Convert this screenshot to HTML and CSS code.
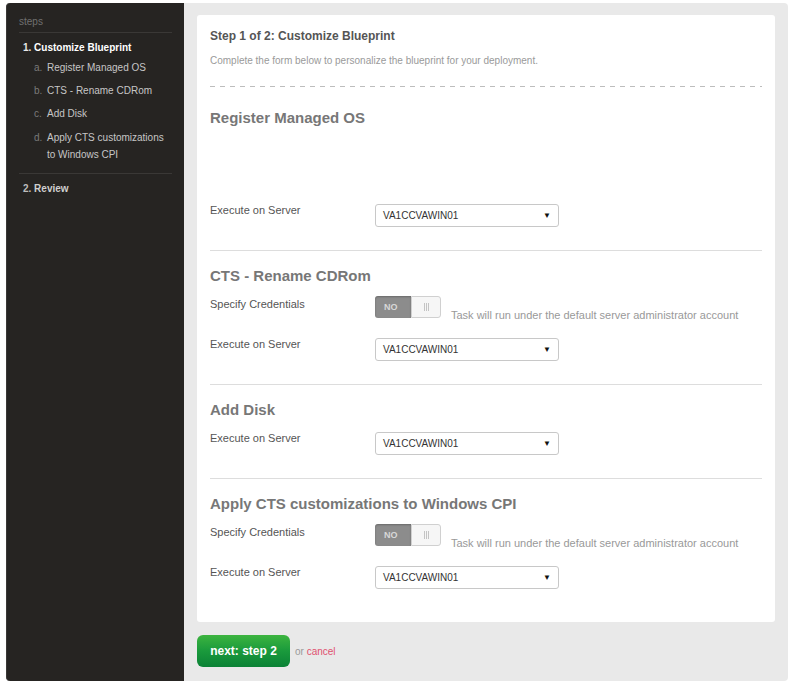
FILE: index.html
```html
<!DOCTYPE html>
<html>
<head>
<meta charset="utf-8">
<link rel="stylesheet" href="styles.css">
</head>
<body>
<div class="app">
  <aside class="sidebar">
    <div class="steps-title">steps</div>
    <div class="step step-active"><span class="num">1.</span> Customize Blueprint</div>
    <ul class="substeps">
      <li><span class="letter">a.</span><span class="subtext">Register Managed OS</span></li>
      <li><span class="letter">b.</span><span class="subtext">CTS - Rename CDRom</span></li>
      <li><span class="letter">c.</span><span class="subtext">Add Disk</span></li>
      <li class="long"><span class="letter">d.</span><span class="subtext">Apply CTS customizations to Windows CPI</span></li>
    </ul>
    <div class="step step-next"><span class="num">2.</span> Review</div>
  </aside>
  <main class="main">
    <div class="card">
      <h1 class="title">Step 1 of 2: Customize Blueprint</h1>
      <p class="subtitle">Complete the form below to personalize the blueprint for your deployment.</p>
      <div class="dashed"></div>

      <section class="section">
        <h2 class="section-title">Register Managed OS</h2>
        <div class="spacer"></div>
        <div class="field">
          <label class="label">Execute on Server</label>
          <div class="select"><span>VA1CCVAWIN01</span><span class="arrow">&#9660;</span></div>
        </div>
      </section>

      <section class="section">
        <h2 class="section-title">CTS - Rename CDRom</h2>
        <div class="field field-toggle">
          <label class="label">Specify Credentials</label>
          <div class="toggle"><span class="toggle-no">NO</span><span class="toggle-knob"><span class="grip"></span></span></div>
          <span class="help">Task will run under the default server administrator account</span>
        </div>
        <div class="field">
          <label class="label">Execute on Server</label>
          <div class="select"><span>VA1CCVAWIN01</span><span class="arrow">&#9660;</span></div>
        </div>
      </section>

      <section class="section">
        <h2 class="section-title">Add Disk</h2>
        <div class="field">
          <label class="label">Execute on Server</label>
          <div class="select"><span>VA1CCVAWIN01</span><span class="arrow">&#9660;</span></div>
        </div>
      </section>

      <section class="section section-last">
        <h2 class="section-title">Apply CTS customizations to Windows CPI</h2>
        <div class="field field-toggle">
          <label class="label">Specify Credentials</label>
          <div class="toggle"><span class="toggle-no">NO</span><span class="toggle-knob"><span class="grip"></span></span></div>
          <span class="help">Task will run under the default server administrator account</span>
        </div>
        <div class="field">
          <label class="label">Execute on Server</label>
          <div class="select"><span>VA1CCVAWIN01</span><span class="arrow">&#9660;</span></div>
        </div>
      </section>
    </div>
    <div class="actions">
      <button class="btn-next">next: step 2</button>
      <span class="or">or <a class="cancel" href="#">cancel</a></span>
    </div>
  </main>
</div>
</body>
</html>
```

FILE: styles.css
```css
* { box-sizing: border-box; }
html, body { margin: 0; padding: 0; background: #ffffff; }
body { font-family: "Liberation Sans", Arial, sans-serif; }

.app {
  display: flex;
  margin: 3px 0 0 6px;
  width: 782px;
  height: 678px;
}

.sidebar {
  width: 178px;
  flex: none;
  background: #262422;
  border-radius: 4px 0 0 4px;
  border-left: 1px solid #3a3836;
  padding: 12px 12px 0 12px;
  color: #ccc;
  font-size: 10px;
}
.steps-title {
  font-size: 10px;
  line-height: 14px;
  color: #707070;
  padding-bottom: 3px;
  border-bottom: 1px solid #3a3836;
}
.step {
  font-weight: bold;
  line-height: 14px;
  padding-left: 4px;
}
.step-active { color: #ffffff; margin-top: 8px; }
.step-active .num { color: #e8e8e8; }
.step-next { color: #cfcfcf; margin-top: 8px; }
.step-next .num { color: #bdbdbd; }

.substeps {
  list-style: none;
  margin: 4px 0 0 0;
  padding: 0 0 10px 15px;
  border-bottom: 1px solid #3a3836;
}
.substeps li {
  display: flex;
  line-height: 17px;
  margin-top: 6px;
}
.substeps li:first-child { margin-top: 0; }
.substeps li.long { margin-top: 7px; }
.letter { width: 13px; flex: none; color: #7a7a7a; }
.subtext { color: #c6c6c6; }

.main {
  flex: 1;
  background: #e9e9e9;
  border-radius: 0 4px 4px 0;
  padding: 12px 13px 14px 13px;
  display: flex;
  flex-direction: column;
}

.card {
  background: #ffffff;
  border-radius: 3px;
  padding: 13px 13px 0 13px;
  height: 607px;
}
.title {
  margin: 0;
  font-size: 12px;
  line-height: 16px;
  font-weight: bold;
  color: #555555;
}
.subtitle {
  margin: 10px 0 0 0;
  font-size: 10px;
  line-height: 14px;
  color: #9a9a9a;
}
.dashed {
  margin-top: 18px;
  height: 1px;
  background: repeating-linear-gradient(90deg, #bdbdbd 0 5px, transparent 5px 10px);
}

.section {
  padding: 21px 0 23px 0;
  border-bottom: 1px solid #dddddd;
}
.section + .section { padding-top: 15px; }
.section-last { border-bottom: none; }
.section-title {
  margin: 0 0 11px 0;
  font-size: 15px;
  line-height: 20px;
  font-weight: bold;
  color: #777777;
}
.spacer { height: 64px; }

.field {
  display: flex;
  align-items: flex-start;
  min-height: 23px;
}
.field + .field { margin-top: 15px; }
.label {
  width: 165px;
  flex: none;
  font-size: 11px;
  line-height: 15px;
  color: #555555;
}
.select {
  margin-top: 1px;
  width: 184px;
  height: 23px;
  border: 1px solid #c8c8c8;
  border-radius: 3px;
  display: flex;
  align-items: center;
  justify-content: space-between;
  padding: 0 7px 0 7px;
  font-size: 10px;
  color: #333333;
  background: #ffffff;
}
.arrow { font-size: 8px; color: #111; }

.toggle {
  display: flex;
  width: 66px;
  height: 22px;
  flex: none;
  margin-top: -1px;
}
.toggle-no {
  width: 36px;
  background: #8c8c8c;
  border-radius: 3px 0 0 3px;
  box-shadow: inset 0 1px 2px rgba(0,0,0,0.25);
  color: #d8d8d8;
  font-size: 9px;
  font-weight: bold;
  display: flex;
  align-items: center;
  padding-left: 9px;
}
.toggle-knob {
  flex: 1;
  background: #f6f6f6;
  border: 1px solid #d0d0d0;
  border-radius: 0 3px 3px 0;
  display: flex;
  align-items: center;
  justify-content: center;
}
.grip {
  width: 5px;
  height: 8px;
  background: repeating-linear-gradient(90deg, #c4c4c4 0 1px, transparent 1px 2px);
}
.help {
  margin-left: 10px;
  padding-top: 12px;
  font-size: 11px;
  line-height: 13px;
  color: #999999;
}

.actions {
  display: flex;
  align-items: center;
  margin-top: 13px;
}
.btn-next {
  width: 93px;
  height: 32px;
  border: none;
  border-radius: 6px;
  background: linear-gradient(180deg, #3cb43f 0%, #1a9a3c 50%, #0b8236 100%);
  color: #ffffff;
  font-family: "Liberation Sans", Arial, sans-serif;
  font-size: 12px;
  font-weight: bold;
  padding: 0;
}
.or {
  margin-left: 5px;
  font-size: 10px;
  color: #999999;
}
.cancel {
  color: #e0506f;
  text-decoration: none;
}
```
